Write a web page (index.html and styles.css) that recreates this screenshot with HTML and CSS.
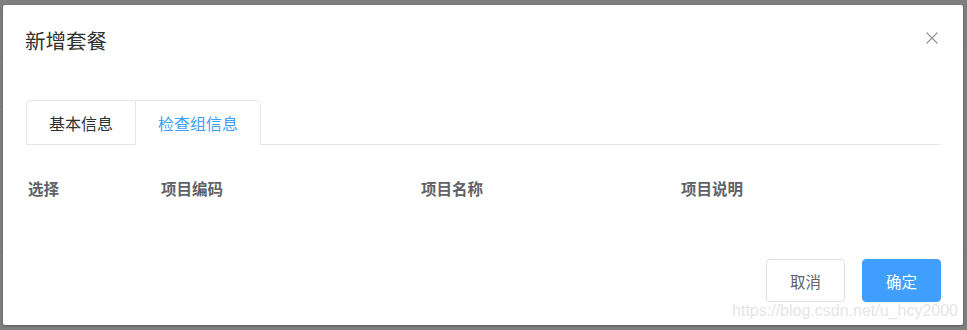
FILE: index.html
```html
<!DOCTYPE html>
<html lang="zh-CN">
<head>
<meta charset="utf-8">
<title>新增套餐</title>
<link rel="stylesheet" href="styles.css">
</head>
<body>
<div class="dialog">
  <div class="dialog-header">
    <span class="dialog-title">新增套餐</span>
    <button class="dialog-close" type="button" aria-label="关闭">
      <svg width="12" height="12" viewBox="0 0 12 12"><path d="M0.5 0.5 L11.5 11.5 M11.5 0.5 L0.5 11.5" stroke="#909399" stroke-width="1.1" fill="none"/></svg>
    </button>
  </div>
  <div class="dialog-body">
    <div class="tabs-header">
      <div class="tabs-nav">
        <div class="tab-item">基本信息</div>
        <div class="tab-item is-active">检查组信息</div>
      </div>
    </div>
    <div class="tab-pane">
      <div class="table-head">
        <div class="th col-select">选择</div>
        <div class="th col-wide">项目编码</div>
        <div class="th col-wide">项目名称</div>
        <div class="th col-wide">项目说明</div>
      </div>
    </div>
  </div>
  <div class="dialog-footer">
    <button class="btn btn-default" type="button">取消</button>
    <button class="btn btn-primary" type="button">确定</button>
  </div>
  <div class="watermark">https://blog.csdn.net/u_hcy2000</div>
</div>
</body>
</html>
```

FILE: styles.css
```css
html, body {
  margin: 0;
  padding: 0;
}
body {
  width: 967px;
  height: 330px;
  overflow: hidden;
  background-color: #7f7f7f;
  background-image:
    linear-gradient(#767676, #767676),
    linear-gradient(#767676, #767676),
    linear-gradient(#767676, #767676),
    linear-gradient(#767676, #767676),
    linear-gradient(#767676, #767676);
  background-repeat: no-repeat;
  background-size: 3px 1px, 3px 1px, 3px 1px, 5px 1px, 5px 1px;
  background-position: 0 57px, 0 106px, 0 252px, 962px 43px, 962px 252px;
  font-family: "Noto Sans CJK SC", "Noto Sans", sans-serif;
  padding: 5px 0 0 3px;
  box-sizing: border-box;
}
.dialog {
  position: relative;
  width: 960px;
  height: 320px;
  background: #fff;
  border-radius: 2px;
  box-shadow: 0 1px 3px rgba(0, 0, 0, 0.3);
  display: flex;
  flex-direction: column;
  box-sizing: border-box;
}
.dialog-header {
  padding: 22px 22px 11px 22px;
  position: relative;
}
.dialog-title {
  display: block;
  font-size: 20.5px;
  line-height: 26px;
  color: #303133;
}
.dialog-close {
  position: absolute;
  top: 27px;
  right: 25px;
  width: 12px;
  height: 12px;
  padding: 0;
  margin: 0;
  border: none;
  background: transparent;
  display: flex;
}
.dialog-body {
  flex: 1;
  padding: 36px 22px 0 23px;
}
.tabs-header {
  border-bottom: 1px solid #e4e7ed;
  display: flex;
  height: 45px;
  box-sizing: border-box;
}
.tabs-nav {
  display: flex;
  border: 1px solid #e4e7ed;
  border-bottom: none;
  border-radius: 4px 4px 0 0;
  height: 45px;
  box-sizing: border-box;
}
.tab-item {
  padding: 0 22px;
  height: 44px;
  line-height: 44px;
  font-size: 16px;
  color: #303133;
  box-sizing: border-box;
}
.tab-item + .tab-item {
  border-left: 1px solid #e4e7ed;
}
.tab-item.is-active {
  color: #409eff;
  background: #fff;
  height: 45px;
  border-bottom: 1px solid #fff;
}
.tab-pane {
  padding-top: 31px;
}
.table-head {
  display: flex;
}
.th {
  font-size: 15.5px;
  line-height: 24px;
  font-weight: bold;
  color: #606266;
  padding-left: 2px;
  box-sizing: border-box;
}
.col-select {
  width: 133px;
}
.col-wide {
  width: 260px;
}
.dialog-footer {
  display: flex;
  justify-content: flex-end;
  gap: 17px;
  padding: 0 22px 23px 22px;
}
.btn {
  width: 79px;
  height: 43px;
  border-radius: 4px;
  font-family: "Noto Sans CJK SC", "Noto Sans", sans-serif;
  font-size: 15.5px;
  padding: 0;
  box-sizing: border-box;
  cursor: pointer;
}
.btn-default {
  background: #fff;
  border: 1px solid #dcdfe6;
  color: #606266;
}
.btn-primary {
  background: #409eff;
  border: 1px solid #409eff;
  color: #fff;
}
.watermark {
  position: absolute;
  right: 5px;
  top: 297px;
  font-family: "Liberation Sans", Arial, sans-serif;
  font-size: 16px;
  line-height: 18px;
  color: #e6e6e6;
  white-space: nowrap;
  pointer-events: none;
}
```
